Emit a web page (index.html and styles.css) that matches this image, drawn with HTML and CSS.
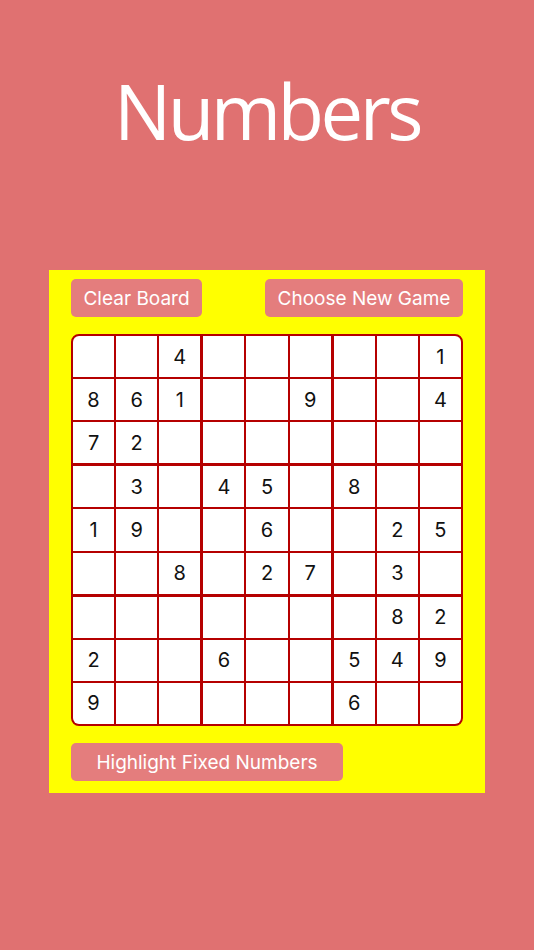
FILE: index.html
```html
<!DOCTYPE html>
<html lang="en">
<head>
<meta charset="utf-8">
<title>Numbers</title>
<link rel="stylesheet" href="styles.css">
</head>
<body>
<main class="screen">
  <h1 class="title">Numbers</h1>
  <section class="panel">
    <div class="toolbar">
      <button class="btn btn-clear">Clear Board</button>
      <button class="btn btn-new">Choose New Game</button>
    </div>
    <div class="board">
      <div class="box"><div class="cell"></div><div class="cell"></div><div class="cell">4</div><div class="cell">8</div><div class="cell">6</div><div class="cell">1</div><div class="cell">7</div><div class="cell">2</div><div class="cell"></div></div>
      <div class="box"><div class="cell"></div><div class="cell"></div><div class="cell"></div><div class="cell"></div><div class="cell"></div><div class="cell">9</div><div class="cell"></div><div class="cell"></div><div class="cell"></div></div>
      <div class="box"><div class="cell"></div><div class="cell"></div><div class="cell">1</div><div class="cell"></div><div class="cell"></div><div class="cell">4</div><div class="cell"></div><div class="cell"></div><div class="cell"></div></div>
      <div class="box"><div class="cell"></div><div class="cell">3</div><div class="cell"></div><div class="cell">1</div><div class="cell">9</div><div class="cell"></div><div class="cell"></div><div class="cell"></div><div class="cell">8</div></div>
      <div class="box"><div class="cell">4</div><div class="cell">5</div><div class="cell"></div><div class="cell"></div><div class="cell">6</div><div class="cell"></div><div class="cell"></div><div class="cell">2</div><div class="cell">7</div></div>
      <div class="box"><div class="cell">8</div><div class="cell"></div><div class="cell"></div><div class="cell"></div><div class="cell">2</div><div class="cell">5</div><div class="cell"></div><div class="cell">3</div><div class="cell"></div></div>
      <div class="box"><div class="cell"></div><div class="cell"></div><div class="cell"></div><div class="cell">2</div><div class="cell"></div><div class="cell"></div><div class="cell">9</div><div class="cell"></div><div class="cell"></div></div>
      <div class="box"><div class="cell"></div><div class="cell"></div><div class="cell"></div><div class="cell">6</div><div class="cell"></div><div class="cell"></div><div class="cell"></div><div class="cell"></div><div class="cell"></div></div>
      <div class="box"><div class="cell"></div><div class="cell">8</div><div class="cell">2</div><div class="cell">5</div><div class="cell">4</div><div class="cell">9</div><div class="cell">6</div><div class="cell"></div><div class="cell"></div></div>
    </div>
    <div class="footer">
      <button class="btn btn-highlight">Highlight Fixed Numbers</button>
    </div>
  </section>
</main>
</body>
</html>
```
FILE: styles.css
```css
html, body {
  margin: 0;
  padding: 0;
  background: #e07171;
}
.screen {
  width: 534px;
  height: 950px;
  display: flex;
  flex-direction: column;
  align-items: center;
}
.title {
  margin: 56px 0 0 0;
  height: 214px;
  font-family: "Open Sans", "Liberation Sans", sans-serif;
  font-weight: 400;
  font-size: 76px;
  line-height: 110px;
  letter-spacing: -3.5px;
  color: #ffffff;
}
.panel {
  width: 436px;
  height: 523px;
  box-sizing: border-box;
  background: #ffff00;
  padding: 9px 22px 12px 22px;
  display: flex;
  flex-direction: column;
  gap: 17px;
}
.toolbar {
  display: flex;
  justify-content: space-between;
}
.btn {
  height: 38px;
  border: none;
  border-radius: 5px;
  background: #e47d7d;
  color: #ffffff;
  font-family: Inter, "Noto Sans", sans-serif;
  font-size: 19px;
  padding: 0;
  cursor: pointer;
}
.btn-clear { width: 131px; }
.btn-new { width: 198px; }
.btn-highlight { width: 272px; }
.footer {
  display: flex;
}
.board {
  width: 392px;
  height: 392px;
  box-sizing: border-box;
  border: 2px solid #b50000;
  border-radius: 8px;
  overflow: hidden;
  background: #b50000;
  display: grid;
  grid-template-columns: repeat(3, 1fr);
  grid-template-rows: repeat(3, 1fr);
  gap: 3px;
}
.box {
  display: grid;
  grid-template-columns: repeat(3, 1fr);
  grid-template-rows: repeat(3, 1fr);
  gap: 2px;
}
.cell {
  background: #ffffff;
  display: flex;
  align-items: center;
  justify-content: center;
  font-family: Inter, "Noto Sans", sans-serif;
  font-size: 20px;
  color: #111111;
}
```
